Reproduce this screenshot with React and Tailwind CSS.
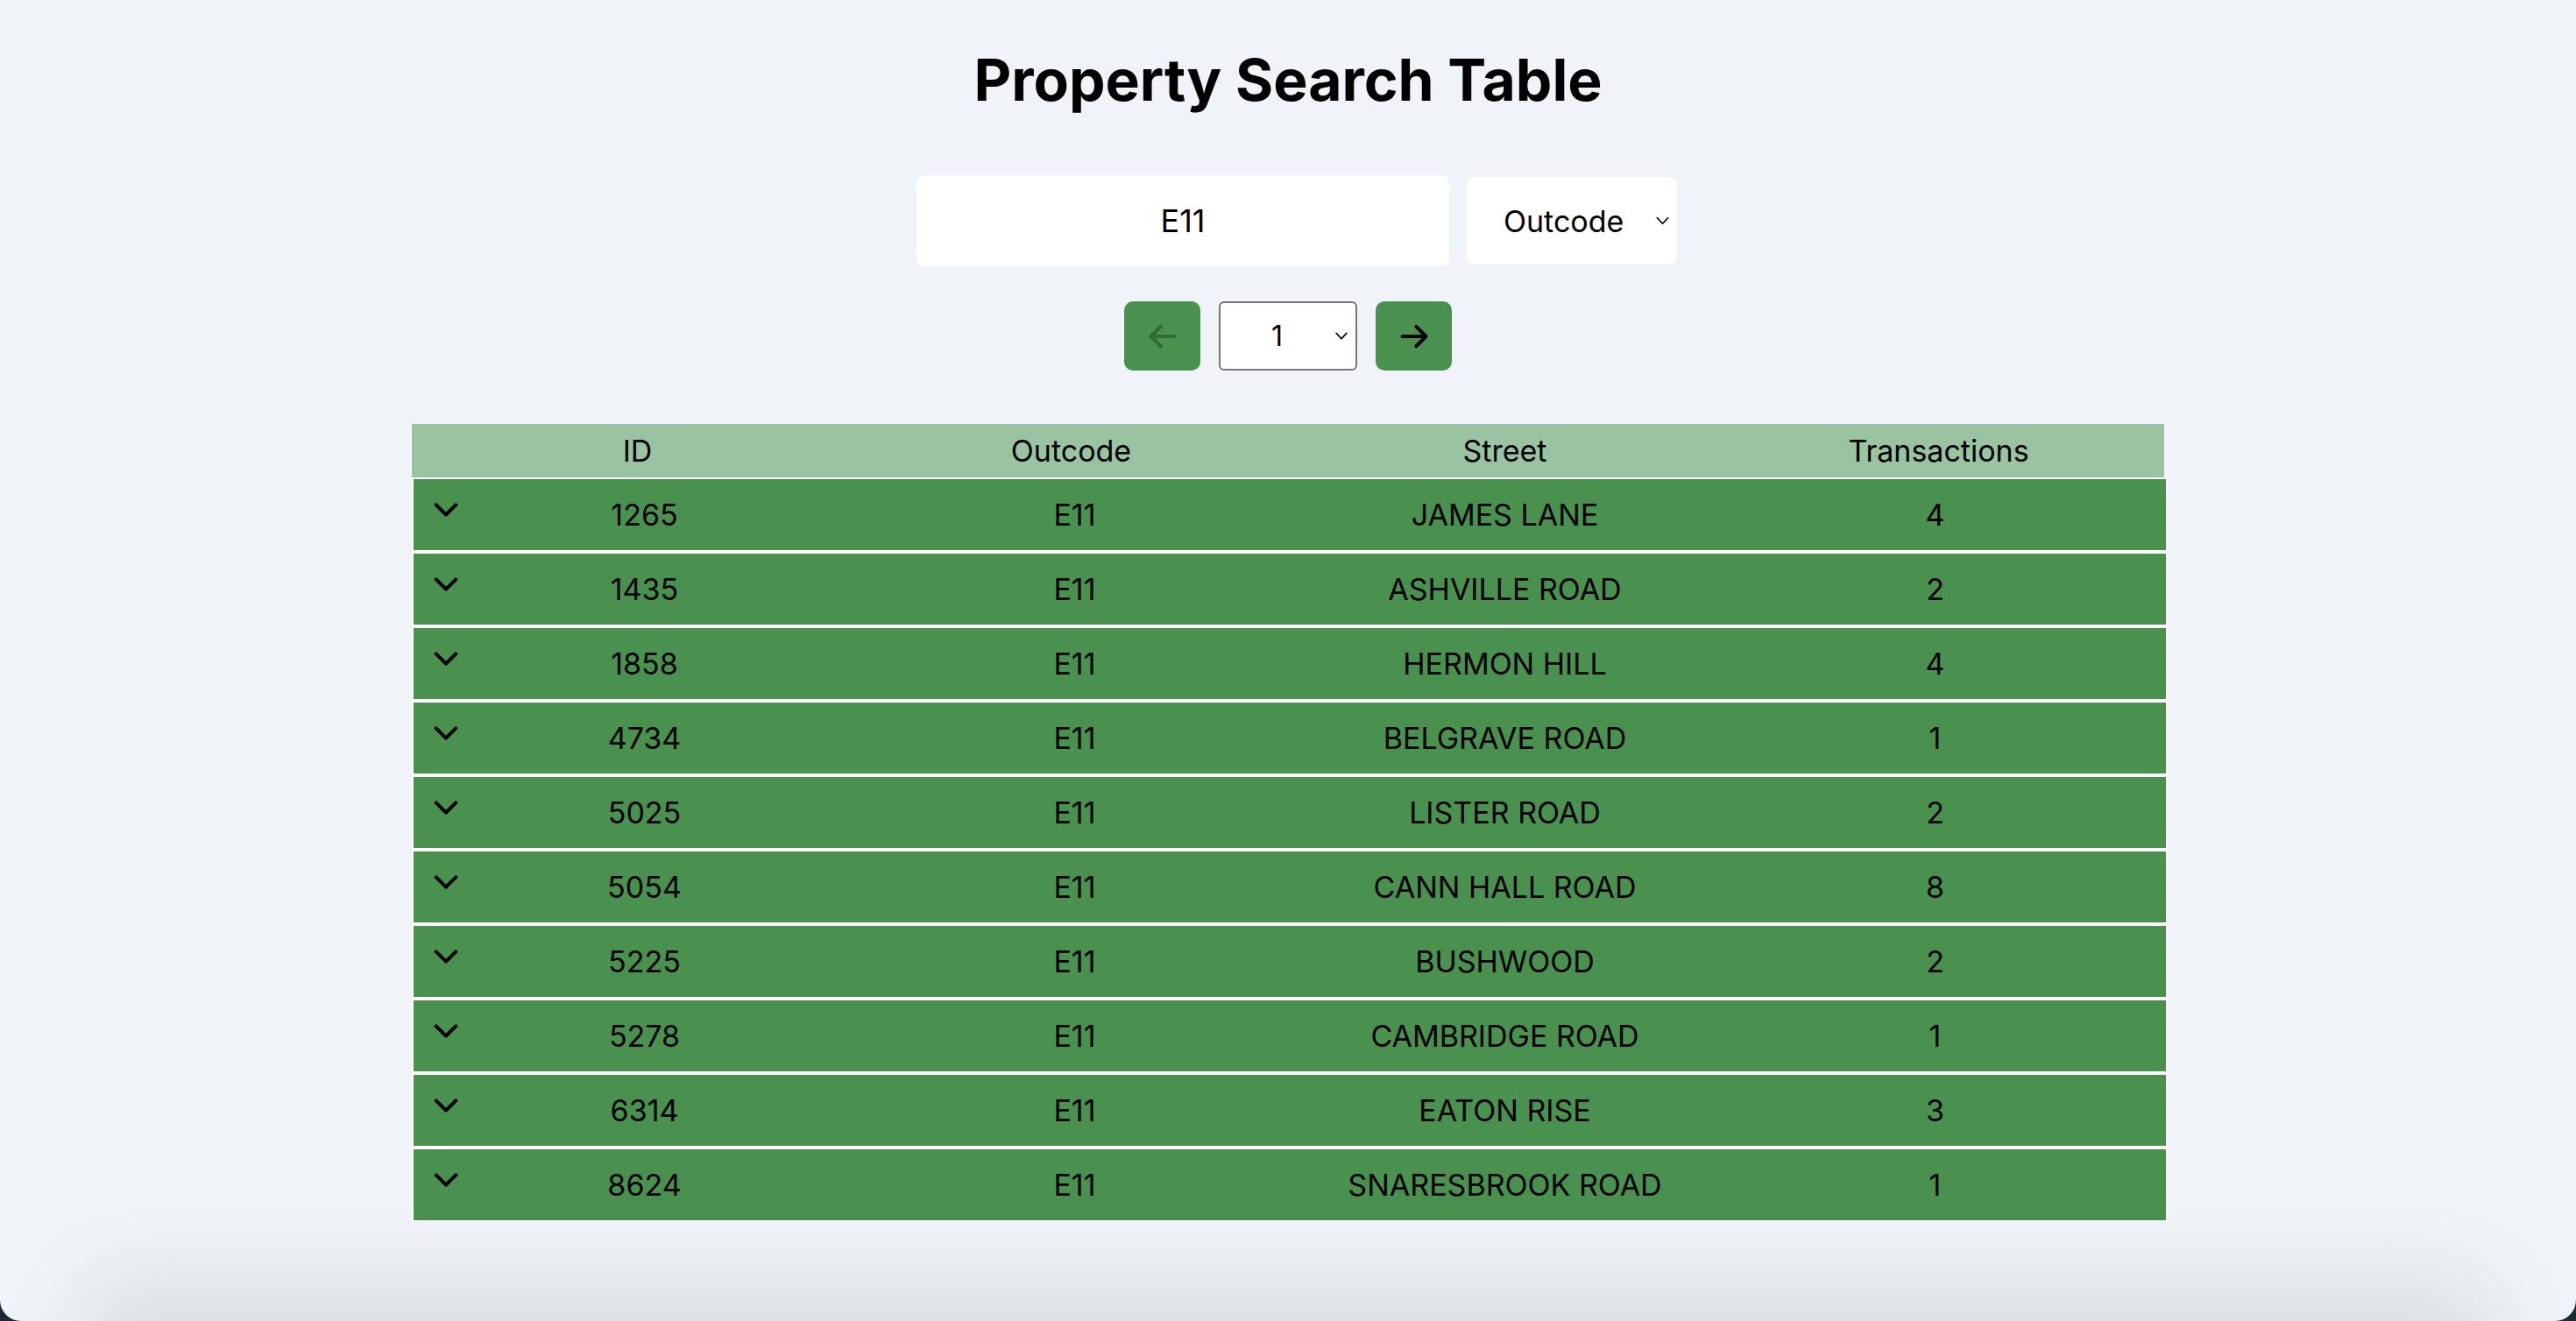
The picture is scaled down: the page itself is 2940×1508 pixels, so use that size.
import React from "react";

const rows = [
  ["1265", "E11", "JAMES LANE", "4"],
  ["1435", "E11", "ASHVILLE ROAD", "2"],
  ["1858", "E11", "HERMON HILL", "4"],
  ["4734", "E11", "BELGRAVE ROAD", "1"],
  ["5025", "E11", "LISTER ROAD", "2"],
  ["5054", "E11", "CANN HALL ROAD", "8"],
  ["5225", "E11", "BUSHWOOD", "2"],
  ["5278", "E11", "CAMBRIDGE ROAD", "1"],
  ["6314", "E11", "EATON RISE", "3"],
  ["8624", "E11", "SNARESBROOK ROAD", "1"],
];

function ArrowLeft({ className }) {
  return (
    <svg viewBox="0 0 24 24" fill="none" stroke="currentColor" strokeWidth="2.6" strokeLinecap="round" strokeLinejoin="round" className={className}>
      <path d="M10.5 19.5L3 12m0 0l7.5-7.5M3 12h18" />
    </svg>
  );
}

function ArrowRight({ className }) {
  return (
    <svg viewBox="0 0 24 24" fill="none" stroke="currentColor" strokeWidth="2.6" strokeLinecap="round" strokeLinejoin="round" className={className}>
      <path d="M13.5 4.5L21 12m0 0l-7.5 7.5M21 12H3" />
    </svg>
  );
}

function Chevron({ className }) {
  return (
    <svg viewBox="0 0 24 24" fill="none" stroke="currentColor" strokeWidth="2.7" strokeLinecap="round" strokeLinejoin="round" className={className}>
      <path d="M19.5 8.25l-7.5 7.5-7.5-7.5" />
    </svg>
  );
}

function SmallChevron({ className }) {
  return (
    <svg viewBox="0 0 16 10" fill="none" stroke="currentColor" strokeWidth="1.8" strokeLinecap="round" strokeLinejoin="round" className={className}>
      <path d="M1.5 1.5L8 8.5l6.5-7" />
    </svg>
  );
}

export default function App() {
  return (
    <div className="h-screen w-full overflow-hidden bg-[#1b2a33] font-['Inter',sans-serif] text-black">
      <div className="relative flex h-full w-full flex-col items-center overflow-hidden rounded-b-[24px] bg-[#f0f4f8]">
        <h1 className="mt-[51px] text-[66px] font-bold leading-[80px]">
          Property Search Table
        </h1>

        <div className="mt-[69px] flex items-center gap-[20px] pl-[20px]">
          <div className="flex h-[104px] w-[608px] items-center justify-center rounded-[10px] bg-white text-[36px]">
            E11
          </div>
          <div className="flex h-[100px] w-[240px] items-center justify-between rounded-[10px] bg-white pl-[42px] pr-[9px] text-[34px]">
            <span>Outcode</span>
            <SmallChevron className="h-[10px] w-[15px] text-black" />
          </div>
        </div>

        <div className="mt-[40px] flex items-center gap-[21px]">
          <button className="flex h-[79px] w-[87px] items-center justify-center rounded-[10px] bg-[#4a9150] text-[#2f6a37]">
            <ArrowLeft className="h-[36px] w-[36px]" />
          </button>
          <div className="flex h-[79px] w-[158px] items-center rounded-[6px] border-2 border-[#777777] bg-white">
            <span className="flex-1 pl-[58px] text-[32px] leading-none">1</span>
            <SmallChevron className="mr-[8px] h-[9px] w-[16px] text-black" />
          </div>
          <button className="flex h-[79px] w-[87px] items-center justify-center rounded-[10px] bg-[#4a9150] text-black">
            <ArrowRight className="h-[36px] w-[36px]" />
          </button>
        </div>

        <div className="mt-[61px] w-[2000px]">
          <div className="grid h-[61px] grid-cols-4 items-center bg-[#9ac3a1] px-[10px] text-center text-[34px]">
            <div>ID</div>
            <div>Outcode</div>
            <div>Street</div>
            <div>Transactions</div>
          </div>
          {rows.map((r) => (
            <div
              key={r[0]}
              className="grid h-[85px] w-[2004px] grid-cols-4 items-center border-2 border-white bg-[#4a9150] px-[18px] text-center text-[34px]"
            >
              <Chevron className="col-start-1 row-start-1 ml-[1px] mt-[17px] h-[36px] w-[36px] self-start justify-self-start" />
              <div className="col-start-1 row-start-1">{r[0]}</div>
              <div>{r[1]}</div>
              <div>{r[2]}</div>
              <div>{r[3]}</div>
            </div>
          ))}
        </div>

        <div className="pointer-events-none absolute left-[140px] right-[140px] top-full h-[200px] shadow-[0_0_110px_40px_rgba(0,0,0,0.10)]" />
      </div>
    </div>
  );
}
